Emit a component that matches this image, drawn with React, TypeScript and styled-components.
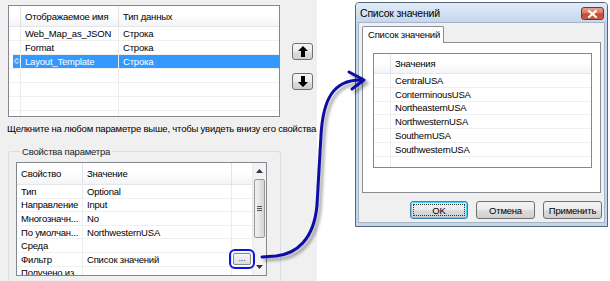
import React from 'react';
import styled, { createGlobalStyle } from 'styled-components';

const GlobalStyle = createGlobalStyle`
  html, body {
    margin: 0;
    padding: 0;
  }
  body {
    width: 610px;
    height: 281px;
    overflow: hidden;
    background: #ffffff;
    font-family: "Liberation Sans", Arial, sans-serif;
    font-size: 9.5px;
    letter-spacing: -0.2px;
    color: #000;
  }
`;

// общий каркас
const Page = styled.div`
  position: relative;
  display: flex;
  width: 610px;
  height: 281px;
  overflow: hidden;
`;

const LeftPanel = styled.div`
  width: 317px;
  flex-shrink: 0;
  box-sizing: border-box;
  background: #f0f0f0;
  padding: 5px 0 0 8px;
  display: flex;
  flex-direction: column;
`;

const TopRow = styled.div`
  display: flex;
`;

const ListView = styled.div`
  width: 272px;
  height: 112px;
  box-sizing: border-box;
  border: 1px solid #828790;
  background: #fff;
  overflow: hidden;
`;

const Grid = styled.div<{ $cols: string; $header: number; $row: number }>`
  display: grid;
  grid-template-columns: ${(p) => p.$cols};
  grid-template-rows: ${(p) => p.$header}px;
  grid-auto-rows: ${(p) => p.$row}px;
  flex: 1;
  min-width: 0;
`;

const HeadCell = styled.div<{ $last?: boolean }>`
  box-sizing: border-box;
  background: linear-gradient(#ffffff 0%, #ffffff 45%, #f3f4f6 100%);
  border-bottom: 1px solid #e4e6ea;
  border-right: ${(p) => (p.$last ? 'none' : '1px solid #e1e3e7')};
  padding-left: 4px;
  display: flex;
  align-items: center;
  white-space: nowrap;
  overflow: hidden;
`;

const Cell = styled.div<{ $sel?: boolean; $last?: boolean; $pad?: number; $open?: boolean }>`
  box-sizing: border-box;
  border-bottom: 1px solid #f0f0f0;
  border-right: ${(p) => (p.$last ? 'none' : '1px solid #ececec')};
  padding-left: ${(p) => p.$pad ?? 4}px;
  display: flex;
  align-items: center;
  white-space: nowrap;
  overflow: ${(p) => (p.$open ? 'visible' : 'hidden')};
  background: ${(p) => (p.$sel ? '#3399ff' : 'transparent')};
  color: ${(p) => (p.$sel ? '#fff' : '#000')};
`;

const IndicatorCell = styled.div`
  box-sizing: border-box;
  border-bottom: 1px solid #f0f0f0;
  border-right: 1px solid #ececec;
  display: flex;
  justify-content: flex-end;
  align-items: stretch;
`;

const Indicator = styled.span`
  width: 7px;
  background: #3399ff;
  color: #fff;
  font-size: 8px;
  display: flex;
  align-items: center;
  justify-content: center;
`;

const ArrowColumn = styled.div`
  display: flex;
  flex-direction: column;
  gap: 13px;
  margin: 38px 0 0 12px;
`;

const ArrowButton = styled.div`
  width: 21px;
  height: 17px;
  box-sizing: border-box;
  border: 1px solid #707070;
  border-radius: 3px;
  background: linear-gradient(#f6f6f6 0%, #ebebeb 50%, #dddddd 51%, #cfcfcf 100%);
  display: flex;
  align-items: center;
  justify-content: center;
`;

const Hint = styled.div`
  line-height: 13px;
  margin: 5px 0 0 -1px;
  white-space: nowrap;
`;

const GroupBox = styled.div`
  width: 273px;
  flex: 1;
  box-sizing: border-box;
  margin-top: 16px;
  border: 1px solid #d5dfe5;
  border-bottom: none;
  border-radius: 3px 3px 0 0;
  padding-left: 7px;
`;

const Legend = styled.div`
  width: fit-content;
  margin: -7px 0 0 4px;
  padding: 0 2px;
  line-height: 13px;
  background: #f0f0f0;
  color: #222;
`;

const PropTable = styled.div`
  width: 251px;
  height: 114px;
  box-sizing: border-box;
  margin-top: 4px;
  border: 1px solid #828790;
  background: #fff;
  display: flex;
  overflow: hidden;
`;

const Scrollbar = styled.div`
  width: 14px;
  flex-shrink: 0;
  background: #f3f3f3;
  border-left: 1px solid #eaeaea;
  box-sizing: border-box;
  display: flex;
  flex-direction: column;
  align-items: center;
`;

const ScrollArrow = styled.div`
  height: 16px;
  width: 100%;
  display: flex;
  align-items: center;
  justify-content: center;
`;

const Thumb = styled.div`
  width: 11px;
  height: 59px;
  box-sizing: border-box;
  border: 1px solid #979797;
  border-radius: 2px;
  background: linear-gradient(90deg, #f2f2f2 0%, #e4e4e4 50%, #d4d4d4 100%);
  display: flex;
  align-items: center;
  justify-content: center;
`;

const Track = styled.div`
  flex: 1;
`;

const EllipsisButton = styled.div`
  position: relative;
  z-index: 2;
  width: 18px;
  height: 12px;
  box-sizing: border-box;
  margin-left: 1px;
  border: 1px solid #8a8a8a;
  border-radius: 2px;
  background: linear-gradient(#f6f6f6, #dedede);
  font-size: 9px;
  line-height: 8px;
  text-align: center;
  color: #333;
  outline: 2px solid #0a14e6;
  outline-offset: 2px;
`;

// диалог
const RightArea = styled.div`
  flex: 1;
  background: #fff;
  padding: 2px 0 0 38px;
`;

const Window = styled.div`
  width: 253px;
  height: 225px;
  box-sizing: border-box;
  border: 1px solid #56677c;
  border-radius: 4px 4px 0 0;
  background: #c4d6ec;
  padding: 0 3px 3px;
  display: flex;
  flex-direction: column;
`;

const TitleBar = styled.div`
  height: 19px;
  margin: 0 -3px;
  padding: 0 3px 0 4px;
  background: linear-gradient(#e3ecf7 0%, #d3e1f2 50%, #c6d7ee 100%);
  display: flex;
  align-items: center;
  justify-content: space-between;
  font-size: 10.5px;
  border-radius: 3px 3px 0 0;
`;

const CloseButton = styled.div`
  width: 23px;
  height: 13px;
  box-sizing: border-box;
  margin-top: 2px;
  border: 1px solid #7a332b;
  border-radius: 3px;
  background: linear-gradient(#eaa18f 0%, #d77a64 45%, #c44a33 55%, #c95f44 100%);
  display: flex;
  align-items: center;
  justify-content: center;
`;

const Content = styled.div`
  flex: 1;
  background: #f0f0f0;
  border: 1px solid #a5b4c6;
  margin: 0 -1px;
  padding: 3px 1px 0 3px;
  display: flex;
  flex-direction: column;
`;

const Tab = styled.div`
  width: 82px;
  height: 17px;
  box-sizing: border-box;
  border: 1px solid #898c95;
  border-bottom: none;
  border-radius: 2px 2px 0 0;
  background: #fff;
  padding-left: 5px;
  line-height: 15px;
  white-space: nowrap;
  position: relative;
  z-index: 1;
  margin-bottom: -1px;
`;

const TabPage = styled.div`
  width: 239px;
  height: 151px;
  box-sizing: border-box;
  border: 1px solid #898c95;
  background: #fff;
  padding: 10px 0 0 10px;
`;

const ValueList = styled.div`
  width: 219px;
  height: 115px;
  box-sizing: border-box;
  border: 1px solid #828790;
  overflow: hidden;
  display: flex;
`;

const ButtonRow = styled.div`
  display: flex;
  justify-content: flex-end;
  gap: 8px;
  margin-top: 8px;
  padding-right: 1px;
`;

const DialogButton = styled.div<{ $focus?: boolean; $w: number }>`
  width: ${(p) => p.$w}px;
  height: 18px;
  box-sizing: border-box;
  border: 1px solid ${(p) => (p.$focus ? '#3c7fb1' : '#707070')};
  border-radius: 3px;
  background: linear-gradient(#f2f2f2 0%, #ebebeb 50%, #dddddd 51%, #cfcfcf 100%);
  box-shadow: ${(p) => (p.$focus ? 'inset 0 0 0 1px #48d6fb' : 'none')};
  display: flex;
  align-items: center;
  justify-content: center;
  padding: 2px;
`;

const FocusRect = styled.span<{ $on?: boolean }>`
  flex: 1;
  align-self: stretch;
  display: flex;
  align-items: center;
  justify-content: center;
  border: 1px dotted ${(p) => (p.$on ? '#333' : 'transparent')};
`;

const Overlay = styled.svg`
  position: absolute;
  left: 0;
  top: 0;
  pointer-events: none;
`;

const params = [
  { name: 'Web_Map_as_JSON', type: 'Строка' },
  { name: 'Format', type: 'Строка' },
  { name: 'Layout_Template', type: 'Строка', selected: true },
  { name: '', type: '' },
  { name: '', type: '' },
  { name: '', type: '' },
  { name: '', type: '' },
];

const props = [
  { key: 'Тип', value: 'Optional' },
  { key: 'Направление', value: 'Input' },
  { key: 'Многозначн...', value: 'No' },
  { key: 'По умолчан...', value: 'NorthwesternUSA' },
  { key: 'Среда', value: '' },
  { key: 'Фильтр', value: 'Список значений', button: true },
  { key: 'Получено из', value: '' },
];

const values = [
  'CentralUSA',
  'ConterminousUSA',
  'NortheasternUSA',
  'NorthwesternUSA',
  'SouthernUSA',
  'SouthwesternUSA',
  '',
];

const UpArrow = () => (
  <svg width="10" height="11" viewBox="0 0 10 11">
    <polygon points="5,0 10,5 7,5 7,11 3,11 3,5 0,5" fill="#000" />
  </svg>
);

const DownArrow = () => (
  <svg width="10" height="11" viewBox="0 0 10 11">
    <polygon points="3,0 7,0 7,6 10,6 5,11 0,6 3,6" fill="#000" />
  </svg>
);

const App = () => {
  return (
    <>
      <GlobalStyle />
      <Page>
        <LeftPanel>
          <TopRow>
            <ListView>
              <Grid $cols="12px 98px 1fr" $header={21} $row={14}>
                <HeadCell />
                <HeadCell>Отображаемое имя</HeadCell>
                <HeadCell $last>Тип данных</HeadCell>
                {params.map((p, i) => (
                  <React.Fragment key={i}>
                    <IndicatorCell>{p.selected && <Indicator>©</Indicator>}</IndicatorCell>
                    <Cell $sel={p.selected}>{p.name}</Cell>
                    <Cell $sel={p.selected} $last>
                      {p.type}
                    </Cell>
                  </React.Fragment>
                ))}
              </Grid>
            </ListView>
            <ArrowColumn>
              <ArrowButton>
                <UpArrow />
              </ArrowButton>
              <ArrowButton>
                <DownArrow />
              </ArrowButton>
            </ArrowColumn>
          </TopRow>

          <Hint>Щелкните на любом параметре выше, чтобы увидеть внизу его свойства.</Hint>

          <GroupBox>
            <Legend>Свойства параметра</Legend>
            <PropTable>
              <Grid $cols="66px 149px 20px" $header={22} $row={13.6}>
                <HeadCell>Свойство</HeadCell>
                <HeadCell>Значение</HeadCell>
                <HeadCell $last />
                {props.map((p, i) => (
                  <React.Fragment key={i}>
                    <Cell>{p.key}</Cell>
                    <Cell>{p.value}</Cell>
                    <Cell $last $pad={0} $open={p.button}>
                      {p.button && <EllipsisButton>...</EllipsisButton>}
                    </Cell>
                  </React.Fragment>
                ))}
              </Grid>
              <Scrollbar>
                <ScrollArrow>
                  <svg width="7" height="4" viewBox="0 0 7 4">
                    <polygon points="3.5,0 7,4 0,4" fill="#333" />
                  </svg>
                </ScrollArrow>
                <Thumb>
                  <svg width="5" height="5" viewBox="0 0 5 5">
                    <path d="M0 0.5H5M0 2.5H5M0 4.5H5" stroke="#555" strokeWidth="1" />
                  </svg>
                </Thumb>
                <Track />
                <ScrollArrow>
                  <svg width="7" height="4" viewBox="0 0 7 4">
                    <polygon points="0,0 7,0 3.5,4" fill="#333" />
                  </svg>
                </ScrollArrow>
              </Scrollbar>
            </PropTable>
          </GroupBox>
        </LeftPanel>

        <RightArea>
          <Window>
            <TitleBar>
              <span>Список значений</span>
              <CloseButton>
                <svg width="9" height="8" viewBox="0 0 9 8">
                  <path d="M1 1L8 7M8 1L1 7" stroke="#fff" strokeWidth="2.2" strokeLinecap="square" />
                </svg>
              </CloseButton>
            </TitleBar>
            <Content>
              <Tab>Список значений</Tab>
              <TabPage>
                <ValueList>
                  <Grid $cols="17px 1fr" $header={20} $row={13.8}>
                    <HeadCell />
                    <HeadCell $last>Значения</HeadCell>
                    {values.map((v, i) => (
                      <React.Fragment key={i}>
                        <Cell />
                        <Cell $last>{v}</Cell>
                      </React.Fragment>
                    ))}
                  </Grid>
                </ValueList>
              </TabPage>
              <ButtonRow>
                <DialogButton $focus $w={58}>
                  <FocusRect $on>OK</FocusRect>
                </DialogButton>
                <DialogButton $w={59}>
                  <FocusRect>Отмена</FocusRect>
                </DialogButton>
                <DialogButton $w={59}>
                  <FocusRect>Применить</FocusRect>
                </DialogButton>
              </ButtonRow>
            </Content>
          </Window>
        </RightArea>

        <Overlay width="610" height="281" viewBox="0 0 610 281">
          <defs>
            <filter id="shadow" x="-20%" y="-20%" width="140%" height="140%">
              <feDropShadow dx="3" dy="3" stdDeviation="1.6" floodColor="#000" floodOpacity="0.35" />
            </filter>
          </defs>
          <g filter="url(#shadow)" fill="none" stroke="#0d0da6" strokeWidth="3" strokeLinecap="round" strokeLinejoin="round">
            <path d="M262 257 L276 256 C296 254 314 240 317 205 L321 135 C323 100 333 79 362 80" />
            <path d="M349 72 L364 80 L352 89" />
          </g>
        </Overlay>
      </Page>
    </>
  );
};

export default App;
